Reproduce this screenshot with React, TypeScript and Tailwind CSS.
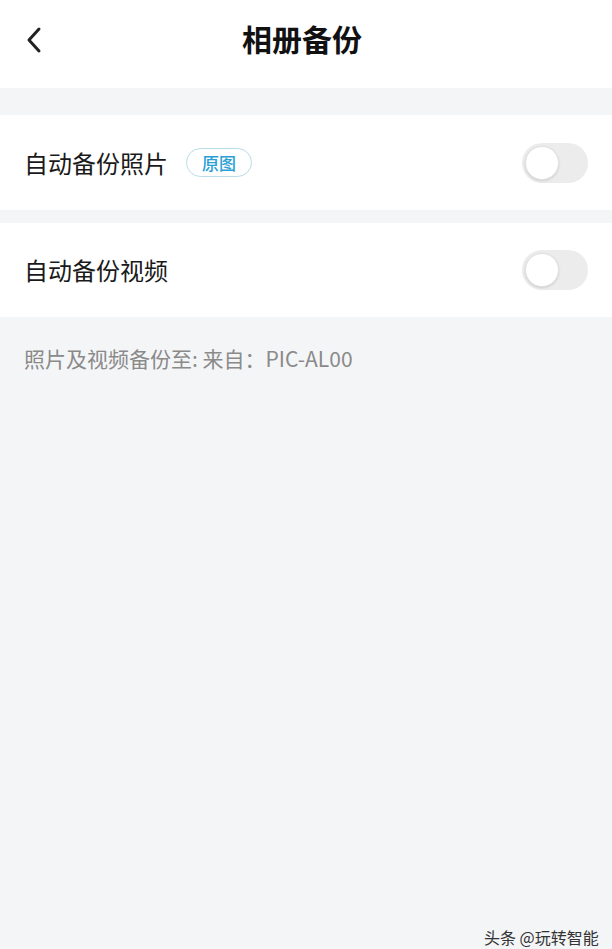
import { useState } from 'react'

function Toggle({ on, onClick }: { on: boolean; onClick: () => void }) {
  return (
    <button
      onClick={onClick}
      className={`relative w-[66px] h-[40px] rounded-full ${on ? 'bg-[#2a9fd6]' : 'bg-[#ececec]'}`}
    >
      <span
        className={`absolute top-[3px] w-[34px] h-[34px] rounded-full bg-white border border-[#e2e2e2] shadow-sm ${on ? 'left-[29px]' : 'left-[3px]'}`}
      />
    </button>
  )
}

export default function App() {
  const [photo, setPhoto] = useState(false)
  const [video, setVideo] = useState(false)

  return (
    <div
      className="relative w-[612px] h-[949px] overflow-hidden bg-[#f4f5f7]"
      style={{ fontFamily: '"Noto Sans CJK SC", Roboto, sans-serif' }}
    >
      <div className="h-[88px] bg-white flex items-center relative">
        <button className="absolute left-[20px] top-[25px] w-[28px] h-[30px] flex items-center justify-center">
          <svg width="18" height="28" viewBox="0 0 18 28" fill="none">
            <path d="M14 3 L4 14 L14 25" stroke="#222" strokeWidth="3" strokeLinecap="round" strokeLinejoin="round" />
          </svg>
        </button>
        <h1 className="w-full text-center text-[30px] font-bold text-[#111] leading-none -mt-[12px] pr-[8px]">相册备份</h1>
      </div>

      <div className="mt-[27px] h-[95px] bg-white flex items-center justify-between pl-[24px] pr-[24px]">
        <div className="flex items-center gap-[18px]">
          <span className="text-[24px] text-[#1a1a1a] leading-none">自动备份照片</span>
          <span className="h-[29px] px-[15px] rounded-full border border-[#b9dce6] text-[#2a9fd6] text-[17px] font-medium flex items-center leading-none">
            原图
          </span>
        </div>
        <Toggle on={photo} onClick={() => setPhoto(!photo)} />
      </div>

      <div className="mt-[13px] h-[94px] bg-white flex items-center justify-between pl-[24px] pr-[24px]">
        <span className="text-[24px] text-[#1a1a1a] leading-none">自动备份视频</span>
        <Toggle on={video} onClick={() => setVideo(!video)} />
      </div>

      <p className="mt-[31px] pl-[24px] text-[21px] text-[#8a8a8a] leading-none">照片及视频备份至: 来自：PIC-AL00</p>

      <div className="absolute left-[484px] top-[929px] text-[16px] text-[#333] leading-none whitespace-nowrap">头条 @玩转智能</div>
    </div>
  )
}
